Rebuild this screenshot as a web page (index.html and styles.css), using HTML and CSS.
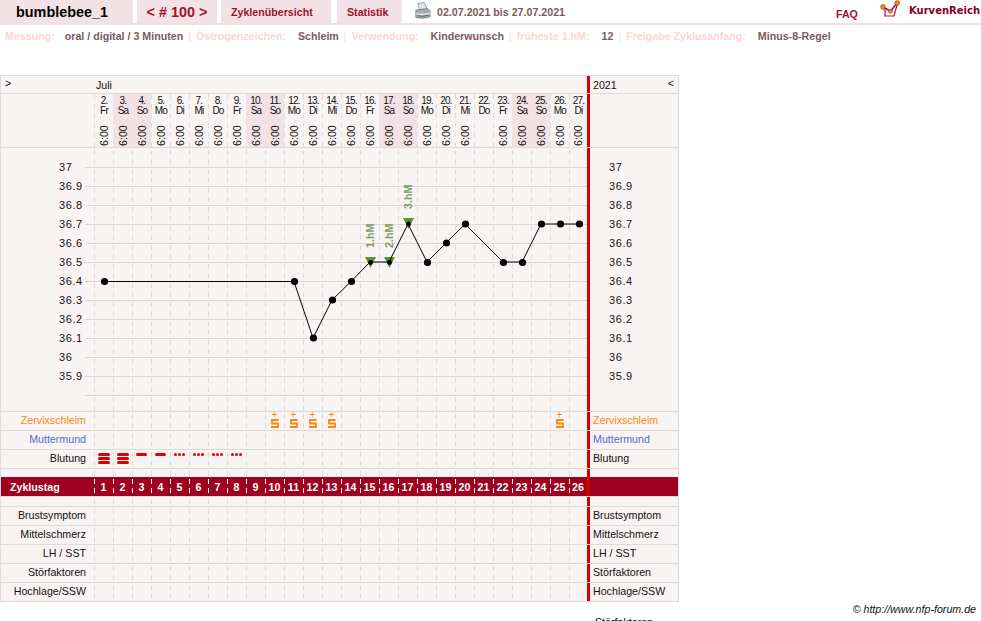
FILE: index.html
```html
<!DOCTYPE html>
<html lang="de">
<head>
<meta charset="utf-8">
<title>bumblebee_1</title>
<link rel="stylesheet" href="styles.css">
</head>
<body>
<header class="top">
  <div class="tab tab-name">bumblebee_1</div>
  <div class="tab tab-nav">&lt; # 100 &gt;</div>
  <a class="tab tab-over">Zyklenübersicht</a>
  <a class="tab tab-stat">Statistik</a>
  <svg class="printer" width="17" height="18" viewBox="0 0 18 18">
    <path d="M4 1 L11 0 L14 7 L6 8 Z" fill="#dfe6ee" stroke="#7d8894" stroke-width=".8"/>
    <path d="M2 8 L14 6.5 L17 9 L17 15 Q9 18 2 16 Z" fill="#a9adb2" stroke="#6d7177" stroke-width=".8"/>
    <path d="M2 11 Q9 13 17 10.5 L17 12 Q9 14.5 2 12.5 Z" fill="#e6e8ea"/>
    <path d="M4 14 Q9 15.5 15 13.5" stroke="#55595e" stroke-width="1" fill="none"/>
  </svg>
  <div class="dates">02.07.2021 bis 27.07.2021</div>
  <a class="faq">FAQ</a>
  <svg class="logo" width="22" height="19" viewBox="0 0 22 19">
    <path d="M5 8 V16 H14 L17 5" fill="#fff" stroke="#b01040" stroke-width="1.2"/>
    <path d="M3 7 L10.500 11.300 L17 3" fill="none" stroke="#b01040" stroke-width="1.600"/>
    <circle cx="3" cy="7" r="2.400" fill="#f08a10" stroke="#a02020" stroke-width=".5"/>
    <circle cx="10.500" cy="11.300" r="2" fill="#f08a10" stroke="#a02020" stroke-width=".5"/>
    <circle cx="17.300" cy="3" r="2.400" fill="#f08a10" stroke="#a02020" stroke-width=".5"/>
  </svg>
  <div class="brand">KurvenReich</div>
</header>

<p class="info">
  <span class="k">Messung:</span><span class="v first">oral / digital / 3 Minuten</span><span class="s">|</span><span class="k">Östrogenzeichen:</span><span class="v">Schleim</span><span class="s">|</span><span class="k">Verwendung:</span><span class="v">Kinderwunsch</span><span class="s">|</span><span class="k">früheste 1.hM:</span><span class="v">12</span><span class="s">|</span><span class="k">Freigabe Zyklusanfang:</span><span class="v">Minus-8-Regel</span>
</p>

<main class="sheet">
  <div class="row r-month">
    <div class="lab lab-left">&gt;</div>
    <div class="days month">Juli</div>
    <div class="side side-year"><span class="year">2021</span><span>&lt;</span></div>
  </div>

  <div class="row r-dates">
    <div class="lab"></div>
    <div class="days">
      <div class="d"><b>2.<br>Fr</b><time>6:00</time></div>
      <div class="d we"><b>3.<br>Sa</b><time>6:00</time></div>
      <div class="d we"><b>4.<br>So</b><time>6:00</time></div>
      <div class="d"><b>5.<br>Mo</b><time>6:00</time></div>
      <div class="d"><b>6.<br>Di</b><time>6:00</time></div>
      <div class="d"><b>7.<br>Mi</b><time>6:00</time></div>
      <div class="d"><b>8.<br>Do</b><time>6:00</time></div>
      <div class="d"><b>9.<br>Fr</b><time>6:00</time></div>
      <div class="d we"><b>10.<br>Sa</b><time>6:00</time></div>
      <div class="d we"><b>11.<br>So</b><time>6:00</time></div>
      <div class="d"><b>12.<br>Mo</b><time>6:00</time></div>
      <div class="d"><b>13.<br>Di</b><time>6:00</time></div>
      <div class="d"><b>14.<br>Mi</b><time>6:00</time></div>
      <div class="d"><b>15.<br>Do</b><time>6:00</time></div>
      <div class="d"><b>16.<br>Fr</b><time>6:00</time></div>
      <div class="d we"><b>17.<br>Sa</b><time>6:00</time></div>
      <div class="d we"><b>18.<br>So</b><time>6:00</time></div>
      <div class="d"><b>19.<br>Mo</b><time>6:00</time></div>
      <div class="d"><b>20.<br>Di</b><time>6:00</time></div>
      <div class="d"><b>21.<br>Mi</b><time>6:00</time></div>
      <div class="d"><b>22.<br>Do</b></div>
      <div class="d"><b>23.<br>Fr</b><time>6:00</time></div>
      <div class="d we"><b>24.<br>Sa</b><time>6:00</time></div>
      <div class="d we"><b>25.<br>So</b><time>6:00</time></div>
      <div class="d"><b>26.<br>Mo</b><time>6:00</time></div>
      <div class="d"><b>27.<br>Di</b><time>6:00</time></div>
    </div>
    <div class="side"></div>
  </div>

  <div class="row r-chart">
    <svg class="chart" width="677" height="263" viewBox="1 148 677 263">
      <path class="hgrid" d="M85 167.500H587M85 186.500H587M85 205.500H587M85 224.500H587M85 243.500H587M85 262.500H587M85 281.500H587M85 300.500H587M85 319.500H587M85 338.500H587M85 357.500H587M85 376.500H587M85 395.500H587"/>
      <g class="ticks">
        <text x="59" y="171">37</text><text x="59" y="190">36.9</text><text x="59" y="209">36.8</text><text x="59" y="228">36.7</text><text x="59" y="247">36.6</text><text x="59" y="266">36.5</text><text x="59" y="285">36.4</text><text x="59" y="304">36.3</text><text x="59" y="323">36.2</text><text x="59" y="342">36.1</text><text x="59" y="361">36</text><text x="59" y="380">35.9</text>
        <text x="609" y="171">37</text><text x="609" y="190">36.9</text><text x="609" y="209">36.8</text><text x="609" y="228">36.7</text><text x="609" y="247">36.6</text><text x="609" y="266">36.5</text><text x="609" y="285">36.4</text><text x="609" y="304">36.3</text><text x="609" y="323">36.2</text><text x="609" y="342">36.1</text><text x="609" y="361">36</text><text x="609" y="380">35.9</text>
      </g>
      <g class="tri">
        <path d="M365 257H376L370.500 268Z"/><path d="M384 257H395L389.500 268Z"/><path d="M403 218H414L408.500 229Z"/>
      </g>
      <polyline class="curve" points="104,281.500 294,281.500 313,338 332,300 351,281.500 370,262 389,262 408,224 427,262 446,243 465,224 503,262 522,262 541,224 560,224 579,224"/>
      <g class="pts">
        <circle cx="104.500" cy="281.500" r="3.600"/><circle cx="294.500" cy="281.500" r="3.600"/><circle cx="313.500" cy="338" r="3.600"/><circle cx="332.500" cy="300" r="3.600"/><circle cx="351.500" cy="281.500" r="3.600"/><circle cx="370.500" cy="262.500" r="2.400"/><circle cx="389.500" cy="262.500" r="2.400"/><circle cx="408.500" cy="224" r="2.400"/><circle cx="427.500" cy="262.500" r="3.600"/><circle cx="446.500" cy="243" r="3.600"/><circle cx="465.500" cy="224" r="3.600"/><circle cx="503.500" cy="262.500" r="3.600"/><circle cx="522.500" cy="262.500" r="3.600"/><circle cx="541.500" cy="224" r="3.600"/><circle cx="560.500" cy="224" r="3.600"/><circle cx="579.500" cy="224" r="3.600"/>
      </g>
      <g class="hm">
        <text transform="translate(374,248) rotate(-90)">1.hM</text>
        <text transform="translate(393,248) rotate(-90)">2.hM</text>
        <text transform="translate(412,209) rotate(-90)">3.hM</text>
      </g>
    </svg>
    <div class="lab"></div>
    <div class="days"></div>
    <div class="side"></div>
  </div>

  <div class="row">
    <div class="lab orange">Zervixschleim</div>
    <div class="days">
      <i></i><i></i><i></i><i></i><i></i><i></i><i></i><i></i><i></i>
      <i class="sl"><u>+</u><svg width="10" height="10" viewBox="0 0 10 10"><path d="M8.500 1H2V4.500H8V8H1"/></svg></i>
      <i class="sl"><u>+</u><svg width="10" height="10" viewBox="0 0 10 10"><path d="M8.500 1H2V4.500H8V8H1"/></svg></i>
      <i class="sl"><u>+</u><svg width="10" height="10" viewBox="0 0 10 10"><path d="M8.500 1H2V4.500H8V8H1"/></svg></i>
      <i class="sl"><u>+</u><svg width="10" height="10" viewBox="0 0 10 10"><path d="M8.500 1H2V4.500H8V8H1"/></svg></i>
      <i></i><i></i><i></i><i></i><i></i><i></i><i></i><i></i><i></i><i></i><i></i>
      <i class="sl"><u>+</u><svg width="10" height="10" viewBox="0 0 10 10"><path d="M8.500 1H2V4.500H8V8H1"/></svg></i>
      <i></i>
    </div>
    <div class="side orange">Zervixschleim</div>
  </div>
  <div class="row">
    <div class="lab blue">Muttermund</div>
    <div class="days"></div>
    <div class="side blue">Muttermund</div>
  </div>
  <div class="row">
    <div class="lab">Blutung</div>
    <div class="days">
      <i class="bl3"><s></s><s></s><s></s></i><i class="bl3"><s></s><s></s><s></s></i>
      <i class="bl1"><s></s></i><i class="bl1"><s></s></i>
      <i class="bld"><s></s><s></s><s></s></i><i class="bld"><s></s><s></s><s></s></i><i class="bld"><s></s><s></s><s></s></i><i class="bld"><s></s><s></s><s></s></i>
    </div>
    <div class="side">Blutung</div>
  </div>
  <div class="row r-gap">
    <div class="lab"></div>
    <div class="days"></div>
    <div class="side"></div>
  </div>
  <div class="row r-bar">
    <div class="lab">Zyklustag</div>
    <div class="days nums">
      <b>1</b><b>2</b><b>3</b><b>4</b><b>5</b><b>6</b><b>7</b><b>8</b><b>9</b><b>10</b><b>11</b><b>12</b><b>13</b><b>14</b><b>15</b><b>16</b><b>17</b><b>18</b><b>19</b><b>20</b><b>21</b><b>22</b><b>23</b><b>24</b><b>25</b><b>26</b>
    </div>
    <div class="side"></div>
  </div>
  <div class="row r-gap2">
    <div class="lab"></div>
    <div class="days"></div>
    <div class="side"></div>
  </div>
  <div class="row">
    <div class="lab">Brustsymptom</div>
    <div class="days"></div>
    <div class="side">Brustsymptom</div>
  </div>
  <div class="row">
    <div class="lab">Mittelschmerz</div>
    <div class="days"></div>
    <div class="side">Mittelschmerz</div>
  </div>
  <div class="row">
    <div class="lab">LH / SST</div>
    <div class="days"></div>
    <div class="side">LH / SST</div>
  </div>
  <div class="row">
    <div class="lab">Störfaktoren</div>
    <div class="days"></div>
    <div class="side">Störfaktoren</div>
  </div>
  <div class="row">
    <div class="lab">Hochlage/SSW</div>
    <div class="days"></div>
    <div class="side">Hochlage/SSW</div>
  </div>
</main>

<footer class="foot">© http://www.nfp-forum.de</footer>
<div class="cut">Störfaktoren</div>
</body>
</html>
```

FILE: styles.css
```css
* { box-sizing: border-box; }
html, body { height: 621px; overflow: hidden; }
body {
  margin: 0;
  background: #fff;
  color: #111;
  font: 10.67px/13px "Liberation Sans", Arial, sans-serif;
}

.top {
  display: flex;
  align-items: flex-start;
  height: 25px;
  border-bottom: 2px solid #f3dfe2;
}
.tab {
  height: 23px;
  background: #f3e2e5;
  color: #a01030;
  font-weight: bold;
  line-height: 25px;
  padding-left: 10px;
}
.tab-name { width: 133px; color: #000; font-size: 14.4px; padding-left: 16px; }
.tab-nav { width: 80px; margin-left: 4px; font-size: 14.4px; padding-left: 0; text-align: center; }
.tab-over { width: 110px; margin-left: 4px; }
.tab-stat { width: 65px; margin-left: 6px; }
.printer { margin: 2px 0 0 12px; flex: none; }
.dates { margin-left: 6px; font-weight: bold; color: #7a5a60; line-height: 25px; }
.faq { position: absolute; left: 836px; top: 8px; color: #a01030; font-weight: bold; }
.logo { position: absolute; left: 880px; top: 0; }
.brand {
  position: absolute;
  left: 909px;
  top: 4px;
  color: #8a0020;
  font: bold 10px/13px "DejaVu Sans", sans-serif;
  white-space: nowrap;
}

.info {
  margin: 0 0 0 5px;
  padding-top: 5px;
  height: 50px;
  display: flex;
  font-weight: bold;
  white-space: nowrap;
}
.k { color: #fbd6d6; }
.v { color: #7a5a60; margin-left: 12px; }
.v.first { margin-left: 10px; }
.s { color: #fbd6d6; font-weight: normal; margin: 0 5px 0 5px; }

.sheet {
  width: 679px;
  background: #f9f4f4;
  border-left: 1px solid #dedada;
  border-right: 1px solid #dedada;
  border-bottom: 1px solid #dedada;
}
.row {
  position: relative;
  display: flex;
  height: 19px;
  border-top: 1px solid #dedada;
}
.lab {
  width: 93px;
  flex: none;
  padding-right: 8px;
  text-align: right;
  line-height: 17px;
}
.lab-left { text-align: left; padding-left: 4px; }
.days {
  width: 493px;
  flex: none;
  display: grid;
  grid-template-columns: repeat(25, 19px) 18px;
  background-image:
    repeating-linear-gradient(to bottom, #f9f4f4 0 2px, transparent 2px 7px, #f9f4f4 7px 9.5px),
    repeating-linear-gradient(to right, #dfdbdb 0 1px, transparent 1px 19px);
}
.days > i { display: block; position: relative; }
.side {
  flex: 1;
  border-left: 3px solid #d60000;
  padding-left: 3px;
  line-height: 17px;
  white-space: nowrap;
}
.orange { color: #f58a14; }
.blue { color: #4f6cd0; }

.r-month { height: 18px; }
.month { display: block; background: none; padding-left: 2px; line-height: 19px; }
.side-year { display: flex; justify-content: space-between; align-items: flex-start; padding-right: 4px; line-height: 15px; }
.lab-left { line-height: 15px; }
.year { line-height: 19px; }

.r-dates { height: 54px; }
.r-dates .days { background: none; }
.d {
  display: flex;
  flex-direction: column;
  align-items: center;
  justify-content: space-between;
  height: 53px;
  padding: 2px 0 1px 1px;
  background: repeating-linear-gradient(to bottom, #dfdbdb 0 5px, transparent 5px 9.5px) 0 0 / 1px 100% no-repeat;
}
.d.we { background: #f3e2e5; }
.d b {
  font-weight: normal;
  font-size: 10px;
  line-height: 10px;
  letter-spacing: -.8px;
  text-align: center;
  white-space: nowrap;
}
.d time {
  writing-mode: vertical-rl;
  transform: rotate(180deg);
  line-height: 13px;
  height: 22px;
}

.r-chart { height: 264px; }
.r-chart .lab, .r-chart .side, .r-chart .days { height: 263px; }
.chart { position: absolute; left: 0; top: 0; z-index: 1; }
.chart text { font-family: "Liberation Sans", Arial, sans-serif; }
.hgrid { stroke: #dcd8d6; stroke-width: 1; fill: none; }
.ticks text { font-size: 11px; letter-spacing: .6px; fill: #111; }
.curve { fill: none; stroke: #000; stroke-width: 1; }
.pts circle { fill: #000; }
.tri path { fill: #5f922f; }
.hm text { font-size: 10.67px; font-weight: bold; fill: #7c9c60; }

.sl u {
  position: absolute;
  left: 0;
  right: 0;
  top: -2px;
  text-align: center;
  text-decoration: none;
  color: #f58a14;
  font: normal 10px/10px "Liberation Sans", Arial, sans-serif;
}
.sl svg { position: absolute; left: 5px; top: 7px; }
.sl path { fill: none; stroke: #f58a14; stroke-width: 1.8; }

.days > .bl3 { display: flex; flex-direction: column; align-items: center; gap: 1px; padding-top: 3px; }
.bl3 s { display: block; width: 12px; height: 3px; border-radius: 2px; background: #e00000; }
.days > .bl1 { display: flex; justify-content: center; padding-top: 3px; }
.bl1 s { display: block; width: 11px; height: 3px; border-radius: 2px; background: #e00000; }
.days > .bld { display: flex; justify-content: center; gap: 1px; padding-top: 3px; }
.bld s { display: block; width: 3px; height: 3px; border-radius: 50%; background: #e00000; }

.r-gap { height: 9px; }
.r-gap2 { height: 10px; }
.r-bar {
  height: 19px;
  background: #a00020;
  color: #fff;
  border-top: 0;
}
.r-bar .lab { text-align: left; padding-left: 9px; font-weight: bold; line-height: 20px; }
.nums {
  background-image:
    repeating-linear-gradient(to bottom, #a00020 0 2px, transparent 2px 7px, #a00020 7px 9.5px),
    repeating-linear-gradient(to right, #fff 0 1px, transparent 1px 19px);
}
.nums b { display: block; text-align: center; line-height: 20px; }

.foot {
  text-align: right;
  font-style: italic;
  padding: 0 5px 0 0;
  height: 15px;
  line-height: 14px;
}
.cut { margin-left: 595px; line-height: 13px; height: 13px; color: #000; margin-top: -1px; }
```
